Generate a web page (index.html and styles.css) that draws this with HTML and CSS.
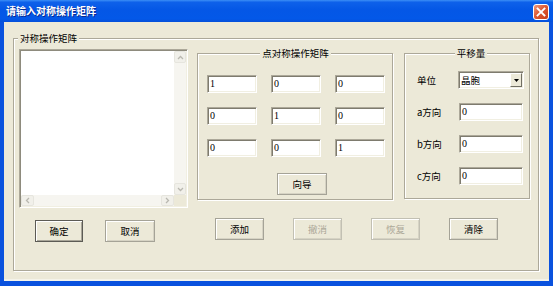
FILE: index.html
```html
<!DOCTYPE html>
<html lang="zh-CN">
<head>
<meta charset="utf-8">
<title>请输入对称操作矩阵</title>
<link rel="stylesheet" href="styles.css">
</head>
<body>
<div class="window">
  <div class="titlebar">
    <span class="title">请输入对称操作矩阵</span>
    <span class="close"><svg width="10" height="10" viewBox="0 0 10 10"><path d="M1.5 1.5 L8.5 8.5 M8.5 1.5 L1.5 8.5" stroke="#fff" stroke-width="1.8" stroke-linecap="square"/></svg></span>
  </div>
  <div class="frame">
    <div class="client">
      <div class="group outer">
        <div class="group-title left">对称操作矩阵</div>
        <div class="main">
          <div class="left-col">
            <div class="listbox">
              <div class="list-area"></div>
              <div class="vscroll">
                <span class="sbtn"><svg width="7" height="5" viewBox="0 0 7 5"><path d="M1 4 L3.5 1.5 L6 4" fill="none" stroke="#B9B8B0" stroke-width="1.3"/></svg></span>
                <span class="strack"></span>
                <span class="sbtn"><svg width="7" height="5" viewBox="0 0 7 5"><path d="M1 1 L3.5 3.5 L6 1" fill="none" stroke="#B9B8B0" stroke-width="1.3"/></svg></span>
              </div>
              <div class="hscroll">
                <span class="sbtn"><svg width="5" height="7" viewBox="0 0 5 7"><path d="M4 1 L1.5 3.5 L4 6" fill="none" stroke="#B9B8B0" stroke-width="1.3"/></svg></span>
                <span class="strack"></span>
                <span class="sbtn"><svg width="5" height="7" viewBox="0 0 5 7"><path d="M1 1 L3.5 3.5 L1 6" fill="none" stroke="#B9B8B0" stroke-width="1.3"/></svg></span>
              </div>
              <div class="corner"></div>
            </div>
            <div class="btn-row left-actions">
              <button class="btn default w48">确定</button>
              <button class="btn w50">取消</button>
            </div>
          </div>
          <div class="right-col">
            <div class="groups">
              <div class="group point">
                <div class="group-title center">点对称操作矩阵</div>
                <div class="matrix">
                  <div class="edit">1</div><div class="edit">0</div><div class="edit">0</div>
                  <div class="edit">0</div><div class="edit">1</div><div class="edit">0</div>
                  <div class="edit">0</div><div class="edit">0</div><div class="edit">1</div>
                </div>
                <button class="btn wizard">向导</button>
              </div>
              <div class="group trans">
                <div class="group-title center">平移量</div>
                <div class="form">
                  <span class="lbl">单位</span>
                  <div class="combo"><span class="combo-text">晶胞</span><span class="combo-btn"><svg width="5" height="3" viewBox="0 0 5 3"><path d="M0 0 H5 L2.5 3 Z" fill="#000"/></svg></span></div>
                  <span class="lbl">a方向</span>
                  <div class="edit field">0</div>
                  <span class="lbl">b方向</span>
                  <div class="edit field">0</div>
                  <span class="lbl">c方向</span>
                  <div class="edit field">0</div>
                </div>
              </div>
            </div>
            <div class="btn-row right-actions">
              <button class="btn w49">添加</button>
              <button class="btn w49" disabled>撤消</button>
              <button class="btn w49" disabled>恢复</button>
              <button class="btn w49">清除</button>
            </div>
          </div>
        </div>
      </div>
    </div>
  </div>
</div>
</body>
</html>
```
FILE: styles.css
```css
* { box-sizing: border-box; }
html, body { margin: 0; padding: 0; }
body {
  width: 553px;
  height: 286px;
  overflow: hidden;
  background: #0A52DE;
  font-family: "Noto Sans CJK SC", "Liberation Sans", sans-serif;
  font-size: 9.5px;
  color: #000;
}
.window {
  width: 553px;
  height: 286px;
  display: flex;
  flex-direction: column;
}
.titlebar {
  flex: none;
  height: 22px;
  display: flex;
  align-items: center;
  justify-content: space-between;
  padding: 0 4px 0 6px;
  background: linear-gradient(to bottom, #3C8FF6 0%, #0E61EA 10%, #0457E6 45%, #0358E8 85%, #0550DA 100%);
}
.title {
  color: #fff;
  font-weight: bold;
  font-size: 10px;
  line-height: 12px;
  text-shadow: 1px 1px 0 #0B2A8F;
}
.close {
  width: 16px;
  height: 16px;
  margin-top: 2px;
  border: 1px solid #fff;
  border-radius: 3px;
  background: linear-gradient(135deg, #F09A7E 0%, #DE5A34 45%, #C83D17 100%);
  display: flex;
  align-items: center;
  justify-content: center;
}
.frame {
  flex: 1;
  display: flex;
  padding: 0 4px 5px 4px;
  background: #0A52DE;
}
.client {
  flex: 1;
  display: flex;
  flex-direction: column;
  background: #ECE9D8;
  box-shadow: inset 0 -2px 0 #F4F3EA;
}
.group {
  border: 1px solid #ACA899;
  box-shadow: inset 1px 1px 0 #fff, 1px 1px 0 #fff;
}
.group-title {
  width: max-content;
  line-height: 12px;
  margin-top: -7px;
  padding: 0 2px;
  background: #ECE9D8;
}
.group-title.left { margin-left: -1px; }
.group-title.center { margin-left: auto; margin-right: auto; }
.outer {
  flex: 1;
  margin: 16px 10px 10px 9px;
  padding: 0 8px 0 5px;
}
.main {
  display: flex;
  margin-top: 5px;
}
.left-col {
  flex: none;
  width: 169px;
}
.listbox {
  height: 159px;
  display: grid;
  grid-template-columns: 1fr 12px;
  grid-template-rows: 1fr 11px;
  background: #fff;
  border: 1px solid;
  border-color: #ACA899 #fff #fff #ACA899;
  box-shadow: inset 1px 1px 0 #8E8B7D, inset -1px -1px 0 #F1EFE2;
  padding: 1px;
}
.list-area { background: #fff; }
.vscroll, .hscroll {
  display: flex;
  background: #F6F5F0;
}
.vscroll { flex-direction: column; }
.strack { flex: 1; }
.sbtn {
  flex: none;
  width: 12px;
  height: 12px;
  display: flex;
  align-items: center;
  justify-content: center;
  border: 1px solid #E6E5DE;
  border-radius: 2px;
  background: #F1F0EA;
}
.hscroll .sbtn { width: 13px; height: 11px; }
.corner { background: #ECE9D8; }
.btn-row { display: flex; }
.left-actions {
  margin-top: 12px;
  padding-left: 16px;
  gap: 22px;
}
.btn {
  height: 22px;
  padding: 0;
  font: inherit;
  color: #000;
  background: #ECE9D8;
  border: 1px solid #A5A397;
  box-shadow: inset 1px 1px 0 #fff, inset -1px -1px 0 #D6D3C4;
}
.btn.default {
  border-color: #5C5B55;
  box-shadow: inset 1px 1px 0 #fff, inset -1px -1px 0 #A9A699;
}
.btn:disabled {
  color: #ACA899;
  border-color: #C2C0B3;
}
.w48 { width: 48px; }
.w49 { width: 49px; }
.w50 { width: 50px; }
.right-col {
  display: flex;
  flex-direction: column;
  margin-left: 9px;
  margin-top: 4px;
}
.groups {
  display: flex;
  gap: 11px;
}
.point {
  width: 196px;
  height: 147px;
  padding: 0 8px 0 9px;
}
.matrix {
  margin-top: 16px;
  display: grid;
  grid-template-columns: repeat(3, 50px);
  grid-auto-rows: 18px;
  column-gap: 14px;
  row-gap: 14px;
}
.edit {
  height: 18px;
  background: #fff;
  border: 1px solid;
  border-color: #ACA899 #fff #fff #ACA899;
  box-shadow: inset 1px 1px 0 #7E7B6E, inset -1px -1px 0 #F1EFE2;
  padding-left: 2px;
  font-family: "Liberation Serif", "Noto Sans CJK SC", serif;
  font-size: 10px;
  line-height: 16px;
}
.wizard {
  width: 50px;
  margin-top: 16px;
  margin-left: 70px;
}
.trans {
  width: 126px;
  height: 146px;
  padding: 0 4px 0 12px;
}
.form {
  margin-top: 12px;
  display: grid;
  grid-template-columns: 41px 66px;
  grid-auto-rows: 18px;
  row-gap: 14px;
  align-items: center;
}
.lbl { line-height: 12px; }
.field {
  width: 64px;
  margin-left: 1px;
}
.combo {
  height: 18px;
  display: flex;
  background: #fff;
  border: 1px solid;
  border-color: #ACA899 #fff #fff #ACA899;
  box-shadow: inset 1px 1px 0 #7E7B6E, inset -1px -1px 0 #F1EFE2;
  padding: 1px;
}
.combo-text {
  flex: 1;
  padding-left: 1px;
  line-height: 14px;
}
.combo-btn {
  width: 12px;
  display: flex;
  align-items: center;
  justify-content: center;
  background: #ECE9D8;
  border: 1px solid;
  border-color: #fff #716F64 #716F64 #fff;
}
.right-actions {
  margin-top: 18px;
  padding-left: 18px;
  gap: 29px;
}
```
